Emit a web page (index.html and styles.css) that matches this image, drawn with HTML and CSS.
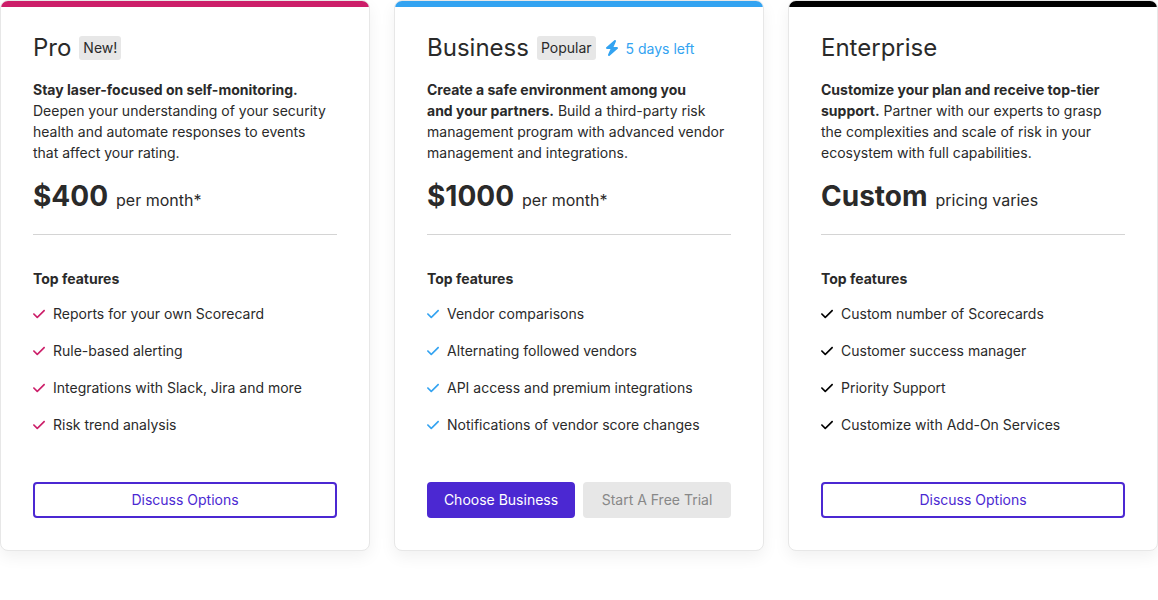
FILE: index.html
```html
<!DOCTYPE html>
<html lang="en">
<head>
<meta charset="utf-8">
<meta name="viewport" content="width=device-width, initial-scale=1">
<title>Pricing plans</title>
<link rel="stylesheet" href="styles.css">
</head>
<body>
<svg class="sprite" aria-hidden="true">
  <symbol id="check" viewBox="0 0 448 512"><path fill="currentColor" d="M438.6 105.4c12.5 12.5 12.5 32.8 0 45.3l-256 256c-12.5 12.5-32.8 12.5-45.3 0l-128-128c-12.5-12.5-12.5-32.8 0-45.3s32.8-12.5 45.3 0L160 338.7 393.4 105.4c12.5-12.5 32.8-12.5 45.3 0z"/></symbol>
  <symbol id="bolt" viewBox="0 0 448 512"><path fill="currentColor" d="M349.4 44.6c5.9-13.7 1.5-29.7-10.6-38.5s-28.6-8-39.9 1.8l-256 224c-10 8.8-13.6 22.9-8.9 35.3S50.7 288 64 288H175.5L98.6 467.4c-5.9 13.7-1.5 29.7 10.6 38.5s28.6 8 39.9-1.8l256-224c10-8.8 13.6-22.9 8.9-35.3s-16.6-20.7-30-20.7H272.5L349.4 44.6z"/></symbol>
</svg>
<main class="plans">
  <article class="plan plan-pro">
    <header class="plan-header">
      <h2 class="plan-name">Pro</h2>
      <span class="badge">New!</span>
    </header>
    <p class="description"><strong>Stay laser-focused on self-monitoring.</strong> Deepen your understanding of your security health and automate responses to events that&nbsp;affect your rating.</p>
    <p class="price"><strong class="amount">$400</strong><span class="period">per month*</span></p>
    <hr class="divider">
    <h3 class="features-title">Top features</h3>
    <ul class="features">
      <li class="feature"><svg class="check"><use href="#check"/></svg>Reports for your own Scorecard</li>
      <li class="feature"><svg class="check"><use href="#check"/></svg>Rule-based alerting</li>
      <li class="feature"><svg class="check"><use href="#check"/></svg>Integrations with Slack, Jira and more</li>
      <li class="feature"><svg class="check"><use href="#check"/></svg>Risk trend analysis</li>
    </ul>
    <div class="actions">
      <button class="button button-outline" type="button">Discuss Options</button>
    </div>
  </article>

  <article class="plan plan-business">
    <header class="plan-header">
      <h2 class="plan-name">Business</h2>
      <span class="badge">Popular</span>
      <span class="trial"><svg class="bolt"><use href="#bolt"/></svg>5 days left</span>
    </header>
    <p class="description"><strong>Create a safe environment among you and&nbsp;your partners.</strong> Build a third-party risk management program with advanced vendor management and integrations.</p>
    <p class="price"><strong class="amount">$1000</strong><span class="period">per month*</span></p>
    <hr class="divider">
    <h3 class="features-title">Top features</h3>
    <ul class="features">
      <li class="feature"><svg class="check"><use href="#check"/></svg>Vendor comparisons</li>
      <li class="feature"><svg class="check"><use href="#check"/></svg>Alternating followed vendors</li>
      <li class="feature"><svg class="check"><use href="#check"/></svg>API access and premium integrations</li>
      <li class="feature"><svg class="check"><use href="#check"/></svg>Notifications of vendor score changes</li>
    </ul>
    <div class="actions">
      <button class="button button-solid" type="button">Choose Business</button>
      <button class="button" type="button" disabled>Start A Free Trial</button>
    </div>
  </article>

  <article class="plan plan-enterprise">
    <header class="plan-header">
      <h2 class="plan-name">Enterprise</h2>
    </header>
    <p class="description"><strong>Customize your plan and receive top-tier support.</strong> Partner with our experts to grasp the complexities and scale of risk in your ecosystem with full capabilities.</p>
    <p class="price"><strong class="amount">Custom</strong><span class="period">pricing varies</span></p>
    <hr class="divider">
    <h3 class="features-title">Top features</h3>
    <ul class="features">
      <li class="feature"><svg class="check"><use href="#check"/></svg>Custom number of Scorecards</li>
      <li class="feature"><svg class="check"><use href="#check"/></svg>Customer success manager</li>
      <li class="feature"><svg class="check"><use href="#check"/></svg>Priority Support</li>
      <li class="feature"><svg class="check"><use href="#check"/></svg>Customize with Add-On Services</li>
    </ul>
    <div class="actions">
      <button class="button button-outline" type="button">Discuss Options</button>
    </div>
  </article>
</main>
</body>
</html>
```

FILE: styles.css
```css
* {
  box-sizing: border-box;
}

body {
  min-height: 100vh;
  margin: 0;
  background: #fff;
  color: #2a2a2a;
  font: 14px/21px Inter, sans-serif;
}

h2, h3, p, ul {
  margin: 0;
  padding: 0;
}

strong {
  font-weight: 700;
}

.sprite {
  display: none;
}

.plans {
  display: grid;
  grid-template-columns: repeat(3, minmax(0, 1fr));
  gap: 24px;
}

.plan {
  --accent: #000;
  display: flex;
  flex-direction: column;
  padding: 0 32px 32px;
  overflow: hidden;
  background: #fff;
  border: 1px solid #e7e7e7;
  border-radius: 8px;
  box-shadow: 0 6px 16px rgba(0, 0, 0, 0.06);
}

.plan::before {
  content: "";
  height: 6px;
  margin: 0 -32px 26px;
  background: var(--accent);
}

.plan-pro {
  --accent: #cc1e69;
}

.plan-business {
  --accent: #33a3f1;
}

.plan-header {
  display: flex;
  align-items: center;
  gap: 8px;
  height: 30px;
  margin-bottom: 16px;
}

.plan-name {
  font-size: 24px;
  font-weight: 400;
  line-height: 30px;
}

.badge {
  padding: 0 4px;
  line-height: 24px;
  background: #e7e7e7;
  border-radius: 3px;
}

.trial {
  display: flex;
  align-items: center;
  gap: 6px;
  color: var(--accent);
}

.bolt {
  width: 16px;
  height: 16px;
}

.price {
  display: flex;
  align-items: baseline;
  gap: 8px;
  margin: 16px 0 17px;
  line-height: 34px;
}

.amount {
  font-size: 28px;
}

.period {
  font-size: 16px;
}

.divider {
  width: 100%;
  height: 1px;
  margin: 0;
  background: #d4d4d4;
  border: 0;
}

.features-title {
  margin: 33px 0 14px;
  font-size: 14px;
  font-weight: 700;
}

.features {
  display: grid;
  gap: 16px;
  margin-bottom: 47px;
  list-style: none;
}

.feature {
  display: flex;
  align-items: center;
  gap: 8px;
}

.check {
  width: 12px;
  height: 14px;
  color: var(--accent);
}

.actions {
  display: flex;
  gap: 8px;
  margin-top: auto;
}

.button {
  flex: 1 1 0;
  height: 36px;
  padding: 0 0 1px;
  font: inherit;
  border: 2px solid transparent;
  border-radius: 4px;
  cursor: pointer;
}

.button-outline {
  color: #4b28d2;
  background: #fff;
  border-color: #4b28d2;
}

.button-solid {
  color: #fff;
  background: #4b28d2;
  border-color: #4b28d2;
}

.button:disabled {
  color: #888;
  background: #e7e7e7;
  border-color: #e7e7e7;
  cursor: default;
}
```
